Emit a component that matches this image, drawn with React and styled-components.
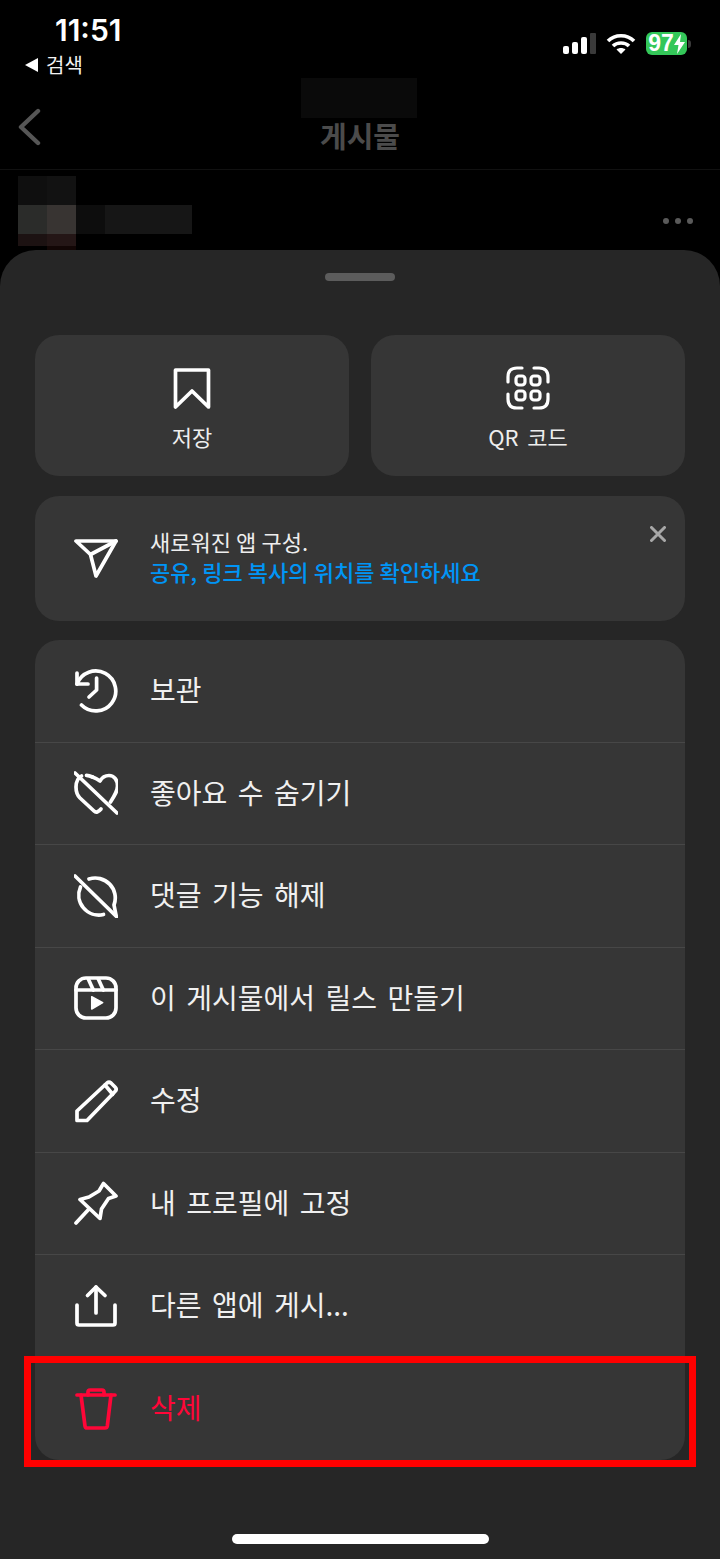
import React from "react";
import styled, { createGlobalStyle } from "styled-components";

const Global = createGlobalStyle`
  html, body { margin: 0; padding: 0; background: #000; }
  * { box-sizing: border-box; }
`;

const FONT = `"Noto Sans CJK KR", "Noto Sans", sans-serif`;

const Screen = styled.div`
  width: 720px; height: 1559px; background: #000; overflow: hidden;
  display: flex; flex-direction: column; font-family: ${FONT}; color: #f2f2f2;
`;
const Backdrop = styled.div`
  height: 250px; flex: none; display: flex; flex-direction: column;
`;
const StatusBar = styled.div`
  height: 78px; flex: none; display: flex; justify-content: space-between; align-items: flex-start;
`;
const StatusLeft = styled.div`
  display: flex; flex-direction: column; padding: 12px 0 0 24px;
`;
const Clock = styled.div`
  font: 600 30px/36px Inter, sans-serif; color: #fff; margin-left: 31px; letter-spacing: 0;
`;
const BackLink = styled.div`
  display: flex; align-items: center; gap: 7px; font-size: 20px; line-height: 30px; color: #f2f2f2; margin-top: 2px;
`;
const StatusRight = styled.div`
  display: flex; align-items: center; padding: 32px 33px 0 0; gap: 10px;
`;
const Battery = styled.div`
  width: 41px; height: 23px; border-radius: 6px; background: #34c759; color: #fff; position: relative;
  display: flex; align-items: center; justify-content: center; gap: 0;
  font: 700 23px/23px "Liberation Sans", sans-serif;
  &::after {
    content: ""; position: absolute; right: -4px; top: 8px; width: 3px; height: 8px;
    background: #3a3a3a; border-radius: 0 3px 3px 0;
  }
`;
const NavBar = styled.div`
  height: 92px; flex: none; display: grid; grid-template-columns: 1fr auto 1fr; align-items: flex-start;
  border-bottom: 1px solid #111;
`;
const NavBack = styled.div`
  padding: 30px 0 0 17px; display: flex;
`;
const NavCenter = styled.div`
  display: flex; flex-direction: column; align-items: center;
`;
const NavMosaic = styled.div`
  width: 116px; height: 40px; background: #0a0a0a; margin-right: 2px;
`;
const NavTitle = styled.div`
  font-size: 29px; font-weight: 700; line-height: 34px; color: #4b4b4b;
`;
const PostHead = styled.div`
  flex: 1; display: flex; justify-content: space-between; padding: 6px 27px 0 18px; min-height: 0;
`;
const Mosaic = styled.div`
  display: grid; grid-template-columns: 29px 29px 29px 87px; grid-template-rows: 29px 29px 12px 6px;
`;
const Tile = styled.div`
  background: ${(p) => p.$c};
  grid-column: span ${(p) => p.$span || 1};
`;
const Dots = styled.div`
  display: flex; gap: 6px; margin-top: 42px; height: 6px;
`;
const Dot = styled.span`
  width: 6px; height: 6px; border-radius: 50%; background: #5a5a5a;
`;
const Sheet = styled.div`
  flex: 1; background: #262626; border-radius: 36px 36px 0 0; padding: 23px 35px 0;
  display: flex; flex-direction: column;
`;
const Handle = styled.div`
  width: 70px; height: 8px; border-radius: 4px; background: #5c5c5c; align-self: center; margin: 0 1px 54px 0;
`;
const TopRow = styled.div`
  display: grid; grid-template-columns: 314px 314px; gap: 22px; margin-bottom: 20px;
`;
const ActionCard = styled.div`
  height: 141px; background: #363636; border-radius: 24px; display: flex; flex-direction: column;
  align-items: center; padding-top: 31px;
`;
const ActionLabel = styled.div`
  font-size: 22px; line-height: 32px; margin-top: 10px; color: #eee; word-spacing: 4px;
`;
const Banner = styled.div`
  height: 125px; background: #363636; border-radius: 24px; margin-bottom: 19px;
  display: flex; padding: 0 19px 0 39px; align-items: center;
`;
const BannerText = styled.div`
  margin-left: 32px; flex: 1; display: flex; flex-direction: column; margin-bottom: 6px;
`;
const BannerLine = styled.div`
  font-size: 22px; line-height: 30px; word-spacing: 0.2px;
  color: ${(p) => p.$c || "#eee"}; font-weight: ${(p) => p.$w || 400};
`;
const Close = styled.div`
  align-self: flex-start; margin-top: 30px; display: flex;
`;
const List = styled.div`
  background: #363636; border-radius: 24px; display: flex; flex-direction: column;
`;
const Row = styled.div`
  height: 102.5px; display: flex; align-items: center; padding-left: 39px; gap: 32px; position: relative;
  font-size: 28px; word-spacing: 4.2px; color: ${(p) => p.$c || "#f0f0f0"};
  border-bottom: ${(p) => (p.$last ? "none" : "1px solid #474747")};
`;
const RowLabel = styled.span`
  margin-bottom: 3px;
`;
const Highlight = styled.div`
  position: absolute; left: -11px; right: -11px; top: -1.5px; height: 111px;
  border: 7px solid #ff0000; pointer-events: none;
`;
const HomeBar = styled.div`
  width: 257px; height: 10px; border-radius: 5px; background: #fff; align-self: center; margin-top: 74px;
`;

const Ico = styled.svg`
  display: block; flex: none; fill: none; stroke: currentColor; stroke-width: ${(p) => p.$sw || 3.7};
  stroke-linecap: round; stroke-linejoin: round; color: #fff;
`;
const RedIco = styled(Ico)`
  color: #ff0638;
`;
const Icon = ({ children, sw, as }) => {
  const C = as || Ico;
  return (
    <C width={44} height={44} viewBox="0 0 44 44" $sw={sw}>
      {children}
    </C>
  );
};

const rows = [
  ["보관", <><path d="M3 15 A20 20 0 1 1 7.5 36" /><path d="M3 4 V15 H14" /><path d="M22.6 9 V21 L15 28" /></>],
  ["좋아요 수 숨기기", <><path d="M1 2 L43 42" /><path d="M18.5 6 C21 7 24 8.5 26 10 C28 6.5 32 4.5 35 4.5 C40.5 4.5 43.5 9.5 43.5 15 C43.5 20 41 24 36.5 31" /><path d="M7.5 5 C4 7 2 11 2 16 C2 20 3 24 6 27 L20 40 C22 42 24.5 41 27 38" /><path d="M12.5 4.3 C14.5 4.3 16.5 5 18.5 6" /></>],
  ["댓글 기능 해제", <><path d="M1 2 L43 43" /><path d="M6.5 13 A20 20 0 0 0 29.5 40.5" /><path d="M15 5 A20 20 0 0 1 40 31 L42 41" /></>],
  ["이 게시물에서 릴스 만들기", <><rect x="2" y="2" width="40" height="40" rx="10" /><path d="M2 14 H42" /><path d="M14.3 3 L19.3 14" /><path d="M24.3 3 L29.3 14" /><path d="M17.7 20.7 V33 L28.7 26.7 Z" fill="currentColor" strokeWidth="1.5" /></>],
  ["수정", <><path d="M3 32 L33 4 Q35 2.5 37 4 L41.5 8.5 Q43 10.5 41 12.5 L13 41.5 L3 41.5 Z" /><path d="M31 6 L38.7 15.3" /></>],
  ["내 프로필에 고정", <><path d="M29.5 2.5 L42 15 L34.5 17.5 L27.5 28 L26 37.5 L6 18.5 L15 16 L25 10 Z" /><path d="M2 42 L15 28" /></>],
  ["다른 앱에 게시...", <><path d="M22 3 V29" /><path d="M13.5 11.5 L22 3 L31 11.5" /><path d="M3 21 V39 Q3 41 5 41 H39 Q41 41 41 39 V21" /></>],
];

export default function App() {
  return (
    <Screen>
      <Global />
      <Backdrop>
        <StatusBar>
          <StatusLeft>
            <Clock>11:51</Clock>
            <BackLink>
              <svg width="15" height="16" viewBox="0 0 15 16"><path d="M14 1 V15 L1 8 Z" fill="#fff" /></svg>
              검색
            </BackLink>
          </StatusLeft>
          <StatusRight>
            <svg width="34" height="21" viewBox="0 0 34 21">
              <rect x="1" y="13" width="6" height="8" rx="2" fill="#fff" />
              <rect x="10" y="9" width="6" height="12" rx="2" fill="#fff" />
              <rect x="19" y="4" width="6" height="17" rx="2" fill="#fff" />
              <rect x="28" y="0" width="6" height="21" rx="1" fill="#3a3a3a" />
            </svg>
            <svg width="30" height="22" viewBox="0 0 30 22" fill="none" stroke="#fff" strokeWidth="3.6" strokeLinecap="butt">
              <path d="M2 8 C9 1 21 1 28 8" />
              <path d="M7 13 C11 9 19 9 23 13" />
              <path d="M15 21 L10.5 16.5 C13 14.5 17 14.5 19.5 16.5 Z" fill="#fff" stroke="none" />
            </svg>
            <Battery>
              97
              <svg width="11" height="20" viewBox="0 0 11 20"><path d="M7 0 L0 11 H4.5 L3 20 L11 8 H6 Z" fill="#fff" /></svg>
            </Battery>
          </StatusRight>
        </StatusBar>
        <NavBar>
          <NavBack>
            <svg width="26" height="38" viewBox="0 0 26 38" fill="none" stroke="#565656" strokeWidth="4.4" strokeLinecap="round" strokeLinejoin="round">
              <path d="M21 3 L4 19 L21 35" />
            </svg>
          </NavBack>
          <NavCenter>
            <NavMosaic />
            <NavTitle>게시물</NavTitle>
          </NavCenter>
          <div />
        </NavBar>
        <PostHead>
          <Mosaic>
            <Tile $c="#0f0f0f" />
            <Tile $c="#121212" />
            <Tile $c="transparent" $span={2} />
            <Tile $c="#2b2c2a" />
            <Tile $c="#383432" />
            <Tile $c="#0d0d0d" />
            <Tile $c="#161616" />
            <Tile $c="#1c1212" />
            <Tile $c="#241616" />
            <Tile $c="transparent" $span={2} />
            <Tile $c="transparent" />
            <Tile $c="#120605" />
          </Mosaic>
          <Dots><Dot /><Dot /><Dot /></Dots>
        </PostHead>
      </Backdrop>
      <Sheet>
        <Handle />
        <TopRow>
          <ActionCard>
            <Icon>
              <path d="M5.5 4 H38.5 V41 L22 25 L5.5 41 Z" />
            </Icon>
            <ActionLabel>저장</ActionLabel>
          </ActionCard>
          <ActionCard>
            <Icon sw={3.2}>
              <path d="M2 16 V11 Q2 2 11 2 H16" />
              <path d="M28 2 H33 Q42 2 42 11 V16" />
              <path d="M2 28 V33 Q2 42 11 42 H16" />
              <path d="M28 42 H33 Q42 42 42 33 V28" />
              <rect x="10" y="10" width="9" height="9" rx="3" />
              <rect x="25" y="10" width="9" height="9" rx="3" />
              <rect x="10" y="25" width="9" height="9" rx="3" />
              <rect x="25" y="25" width="9" height="9" rx="3" />
            </Icon>
            <ActionLabel>QR 코드</ActionLabel>
          </ActionCard>
        </TopRow>
        <Banner>
          <Icon>
            <path d="M2 4 H42 L22 39 L16.5 17.5 Z" />
            <path d="M16.5 17.5 L42 4" />
          </Icon>
          <BannerText>
            <BannerLine>새로워진 앱 구성.</BannerLine>
            <BannerLine $c="#0095f6" $w={500}>공유, 링크 복사의 위치를 확인하세요</BannerLine>
          </BannerText>
          <Close>
            <svg width="16" height="16" viewBox="0 0 16 16" fill="none" stroke="#a8a8a8" strokeWidth="3" strokeLinecap="round">
              <path d="M1.5 1.5 L14.5 14.5 M14.5 1.5 L1.5 14.5" />
            </svg>
          </Close>
        </Banner>
        <List>
          {rows.map(([label, icon]) => (
            <Row key={label}>
              <Icon>{icon}</Icon>
              <RowLabel>{label}</RowLabel>
            </Row>
          ))}
          <Row $c="#ff0638" $last>
            <Icon as={RedIco}>
              <path d="M3 8 H41" />
              <path d="M14 8 V5 Q14 3 16 3 H28 Q30 3 30 5 V8" />
              <path d="M7 8 L11 39 Q11.3 41 13 41 H31 Q33 41 33.3 39 L37 8" />
            </Icon>
            <RowLabel>삭제</RowLabel>
            <Highlight />
          </Row>
        </List>
        <HomeBar />
      </Sheet>
    </Screen>
  );
}
